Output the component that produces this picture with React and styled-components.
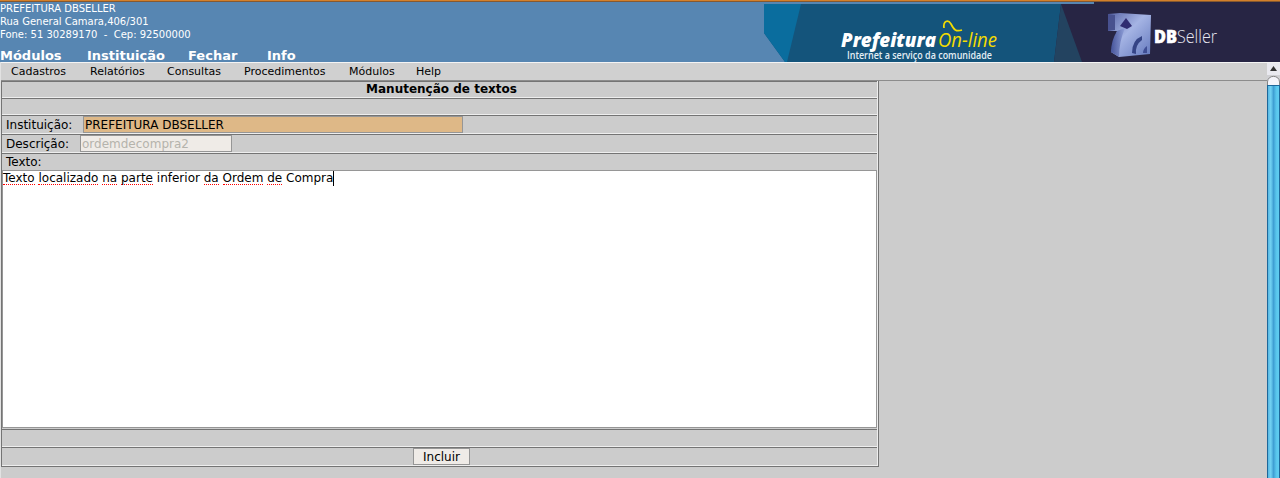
import React from 'react';
import styled, { createGlobalStyle } from 'styled-components';

const Global = createGlobalStyle`
  * { box-sizing: border-box; }
  body { margin: 0; background: #ccc; font-family: 'DejaVu Sans', sans-serif; overflow: hidden; }
`;
const Page = styled.div`height: 478px; display: flex; flex-direction: column; overflow: hidden;`;
const Header = styled.header`
  height: 62px; flex: none; display: flex; justify-content: space-between;
  background: #5786b2; border-top: 1px solid #d3802b; box-shadow: inset 0 1px #87592f; color: #fff;
`;
const HeaderInfo = styled.div`padding-top: 1px; white-space: pre; font-size: 10px; line-height: 13px;`;
const InfoLine = styled.div`letter-spacing: ${p => p.$ls || 0}px;`;
const TopNav = styled.nav`display: flex; margin-top: 7px; font-size: 13px; line-height: 16px; font-weight: bold;`;
const TopLink = styled.a`width: ${p => p.$w}px; letter-spacing: ${p => p.$ls || 0}px;`;
const Banner = styled.svg`display: block; width: 516px; height: 60px; margin-top: 1px;`;
const Body = styled.div`display: flex; flex: 1; min-height: 0;`;
const Content = styled.main`flex: 1; border-left: 1px solid #e2e2e2;`;
const MenuBar = styled.nav`
  height: 19px; display: flex; padding-left: 10px; background: #d0d0d0;
  border-top: 1px solid #f4f4f4; border-bottom: 1px solid #8c8c8c; font-size: 11px; line-height: 17px;
`;
const MenuItem = styled.a`width: ${p => p.$w}px; white-space: nowrap; letter-spacing: ${p => p.$ls || 0}px;`;
const Form = styled.section`
  width: 878px; border-left: 1px solid #747474; border-right: 1px solid #747474;
  border-bottom: 1px solid #747474; font-size: 12px; box-shadow: inset -1px 0 #eee;
`;
const Row = styled.div`
  height: ${p => p.$h}px; display: flex; align-items: flex-start; margin-right: 1px;
  border-top: 1px solid #747474; border-bottom: ${p => (p.$open ? 0 : 1)}px solid #eee;
  justify-content: ${p => (p.$center ? 'center' : 'flex-start')};
  padding-left: ${p => (p.$center ? 0 : 4)}px;
`;
const Title = styled.h1`margin: 0; font-size: 12px; line-height: 15px; letter-spacing: ${p => p.$ls || 0}px; padding-left: 4px;`;
const Label = styled.label`width: ${p => p.$w}px; line-height: 17px; padding-top: ${p => p.$t || 0}px; white-space: nowrap;`;
const Field = styled.div`
  width: ${p => p.$w}px; height: 17px; line-height: 17px; padding-left: 1px; white-space: nowrap;
  border: 1px solid #969696; background: ${p => (p.$disabled ? '#efebe7' : '#deb887')};
  color: ${p => (p.$disabled ? '#b5b3ac' : '#000')}; letter-spacing: ${p => p.$ls || 0}px;
`;
const TextArea = styled.div`
  height: 258px; margin: 0 1px 1px 0; background: #fff; border: 1px solid #969696; line-height: 15px; white-space: pre;
  display: flex; align-items: flex-start;
`;
const Misspelled = styled.span`display: block; height: 14px; border-bottom: 1px dotted #f00;`;
const Caret = styled.i`width: 1px; height: 15px; background: #000;`;
const Button = styled.button`
  width: 57px; height: 17px; padding: 0; margin-left: 4px; border: 1px solid #969696; background: #efebe7;
  font: 12px/16px 'DejaVu Sans', sans-serif; color: #000;
`;
const ScrollBar = styled.aside`width: 13px; display: flex; flex-direction: column; border-top: 1px solid #f4f4f4; background: #e9e9ef;`;
const ScrollSvg = styled.svg`display: block; flex: none;`;
const Track = styled.div`
  flex: 1; border-left: 1px solid #1d6799; border-right: 1px solid #1d6799; border-top: 1px solid #1d6799;
  background: linear-gradient(90deg, #58b7e3, #72d2f3 25%, #3f9fd4 50%, #58c5ec 75%, #60cef2);
`;

const words = [['Texto', 1], ['localizado', 1], ['na', 1], ['parte', 1], ['inferior', 0], ['da', 1], ['Ordem', 1], ['de', 1], ['Compra', 0]];
const menu = [['Cadastros', 79], ['Relatórios', 77], ['Consultas', 77], ['Procedimentos', 105], ['Módulos', 67], ['Help', 40]];

function Brand() {
  return (
    <Banner viewBox="764 2 516 60">
      <defs>
        <linearGradient id="cube" x1="0" y1="0" x2="1" y2="1">
          <stop offset="0" stopColor="#5965a7" /><stop offset=".45" stopColor="#a5b4e4" /><stop offset="1" stopColor="#6378bd" />
        </linearGradient>
        <linearGradient id="side" x1="0" y1="0" x2="1" y2="0">
          <stop offset="0" stopColor="#46549a" /><stop offset="1" stopColor="#90a0d9" />
        </linearGradient>
      </defs>
      <path d="M764 4H1094V2H1280V62H785L764 33Z" fill="#14547b" />
      <path d="M764 4H801L787 62H785L764 33Z" fill="#0a6d9e" />
      <path d="M1061 4H1094V2H1280V62H1054Z" fill="#272544" />
      <path d="M1061 4L1082 62H1054Z" fill="#234360" />
      <text x="841" y="47" textLength="95" lengthAdjust="spacingAndGlyphs" fill="#fff" fontFamily="Open Sans, sans-serif" fontSize="19" fontWeight="800" fontStyle="italic">Prefeitura</text>
      <text x="938" y="47" textLength="59" lengthAdjust="spacingAndGlyphs" fill="#f4dc00" fontFamily="Open Sans, sans-serif" fontSize="20" fontStyle="italic">On-line</text>
      <path d="M944 28C943 21 948 19 951 24C954 30 956 32 962 30" fill="none" stroke="#f4dc00" strokeWidth="1.7" />
      <text x="847" y="58.5" textLength="145" lengthAdjust="spacingAndGlyphs" fill="#e3eef5" fontFamily="Open Sans, sans-serif" fontSize="9.8" fontWeight="600">Internet a serviço da comunidade</text>
      <path d="M1108 14L1120 13L1151 15L1150 54L1119 57L1111 52L1117 31L1108 31Z" fill="url(#cube)" />
      <path d="M1108 14L1115 15L1115 30L1108 31Z" fill="#48518f" />
      <path d="M1117 31L1125 28Q1119 42 1119 57L1111 52Q1111 41 1117 31Z" fill="url(#side)" />
      <path d="M1126 18L1132 26L1127 29L1120 26Z" fill="#302c72" />
      <path d="M1142 36Q1132 40 1132 53L1136 54Q1135 45 1142 40Z" fill="#354486" />
      <path d="M1147 46Q1143 49 1143 53L1147 53Z" fill="#3f4e94" />
      <text x="1154" y="43" textLength="23" lengthAdjust="spacingAndGlyphs" fill="#fff" stroke="#fff" strokeWidth=".5" fontFamily="Open Sans, sans-serif" fontSize="17" fontWeight="800">DB</text>
      <text x="1177" y="43" textLength="40" lengthAdjust="spacingAndGlyphs" fill="#e8e8f2" fontFamily="Open Sans, sans-serif" fontSize="18" fontWeight="300">Seller</text>
    </Banner>
  );
}

export default function App() {
  return (
    <Page>
      <Global />
      <Header>
        <HeaderInfo>
          <InfoLine>PREFEITURA DBSELLER</InfoLine>
          <InfoLine>Rua General Camara,406/301</InfoLine>
          <InfoLine>{'Fone: 51 30289170  -  Cep: 92500000'}</InfoLine>
          <TopNav>
            <TopLink $w={87}>Módulos</TopLink>
            <TopLink $w={101}>Instituição</TopLink>
            <TopLink $w={79}>Fechar</TopLink>
            <TopLink $w={40}>Info</TopLink>
          </TopNav>
        </HeaderInfo>
        <Brand />
      </Header>
      <Body>
        <Content>
          <MenuBar>
            {menu.map(([t, w]) => <MenuItem key={t} $w={w}>{t}</MenuItem>)}
          </MenuBar>
          <Form>
            <Row $h={17} $center><Title>Manutenção de textos</Title></Row>
            <Row $h={17} />
            <Row $h={19}>
              <Label $w={77} $t={1}>Instituição:</Label>
              <Field $w={380}>PREFEITURA DBSELLER</Field>
            </Row>
            <Row $h={19}>
              <Label $w={74} $t={1}>Descrição:</Label>
              <Field $w={152} $disabled>ordemdecompra2</Field>
            </Row>
            <Row $h={17} $open><Label $w={60}>Texto:</Label></Row>
            <TextArea>
              {words.map(([t, bad], i) => (
                <React.Fragment key={i}>
                  {i > 0 && <span> </span>}
                  {bad ? <Misspelled>{t}</Misspelled> : <span>{t}</span>}
                </React.Fragment>
              ))}
              <Caret />
            </TextArea>
            <Row as="div" $h={18} />
            <Row $h={19} $center><Button>Incluir</Button></Row>
          </Form>
        </Content>
        <ScrollBar>
          <ScrollSvg width="13" height="22" viewBox="0 0 13 22">
            <path d="M3 8L6.5 3L10 8Z" fill="#333" />
            <path d="M0 12H13V22H0Z" fill="#d0d0d4" />
            <path d="M.5 22V19C.5 11.5 12.5 11.5 12.5 19V22" fill="#f4f4fa" stroke="#858585" />
          </ScrollSvg>
          <Track />
        </ScrollBar>
      </Body>
    </Page>
  );
}
